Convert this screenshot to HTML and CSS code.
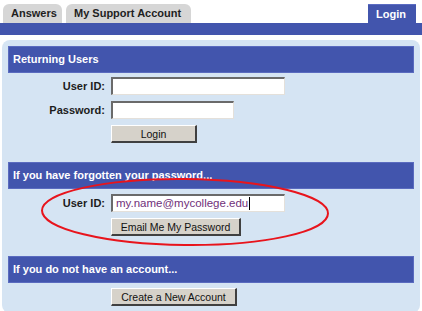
FILE: index.html
```html
<!DOCTYPE html>
<html>
<head>
<meta charset="utf-8">
<link rel="stylesheet" href="styles.css">
</head>
<body>
<div class="tabs">
  <div class="tab">Answers</div>
  <div class="tab">My Support Account</div>
  <div class="tab tab-active">Login</div>
</div>
<div class="tabbar"></div>
<div class="panel">
  <div class="section s1">
    <div class="head">Returning Users</div>
    <div class="form">
      <label class="lbl">User ID:</label>
      <input class="field wide" type="text">
      <label class="lbl">Password:</label>
      <input class="field narrow" type="password">
      <span></span>
      <button class="btn btn-login">Login</button>
    </div>
  </div>
  <div class="section s2">
    <div class="head">If you have forgotten your password...</div>
    <div class="form">
      <label class="lbl">User ID:</label>
      <div class="field wide filled">my.name@mycollege.edu<span class="caret"></span></div>
      <span></span>
      <button class="btn btn-email">Email Me My Password</button>
    </div>
  </div>
  <div class="section s3">
    <div class="head">If you do not have an account...</div>
    <div class="form">
      <span></span>
      <button class="btn btn-create">Create a New Account</button>
    </div>
  </div>
</div>
<svg class="mark" width="422" height="311" viewBox="0 0 422 311">
  <ellipse cx="185" cy="212" rx="143" ry="33" fill="none" stroke="#e8141c" stroke-width="2" transform="rotate(0.6 185 212)"/>
</svg>
</body>
</html>
```

FILE: styles.css
```css
html, body {
  margin: 0;
  padding: 0;
  background: #ffffff;
}
body {
  position: relative;
  width: 422px;
  height: 311px;
  overflow: hidden;
  font-family: "Liberation Sans", Arial, sans-serif;
}
.tabs {
  display: flex;
  gap: 4px;
  padding: 4px 6px 0 3px;
  height: 19px;
}
.tab {
  background: #d6d6d6;
  color: #1e1e1e;
  font-size: 11px;
  font-weight: bold;
  line-height: 19px;
  padding: 0 8px;
  border-radius: 6px 6px 0 0;
}
.tabs .tab:first-child {
  width: 43px;
}
.tabs .tab:nth-child(2) {
  width: 109px;
}
.tab-active {
  margin-left: auto;
  background: #4255ad;
  color: #ffffff;
  border-radius: 0;
  width: 32px;
  padding: 0 8px;
  border-top: 1px solid #5b6cc2;
  line-height: 18px;
}
.tabbar {
  height: 12px;
  background: #4255ad;
}
.panel {
  margin: 5px 2px 0 2px;
  background: #d5e4f3;
  border-radius: 8px;
  padding: 6px 6px 7px 6px;
}
.head {
  height: 25px;
  background: #4255ad;
  border: 1px solid #5a6bbf;
  color: #ffffff;
  font-size: 11px;
  font-weight: bold;
  line-height: 25px;
  padding-left: 4px;
}
.form {
  display: grid;
  grid-template-columns: 97px auto;
  column-gap: 6px;
  row-gap: 6px;
  justify-items: start;
  align-items: center;
}
.s1 .form { margin-top: 4px; }
.s2 .form { margin-top: 5px; }
.s3 .form { margin-top: 5px; }
.s1 { margin-bottom: 19px; }
.s2 { margin-bottom: 20px; }
.lbl {
  justify-self: end;
  font-size: 11px;
  font-weight: bold;
  color: #1c1c1c;
}
.field {
  box-sizing: border-box;
  height: 18px;
  margin: 0;
  padding: 0 3px;
  background: #ffffff;
  border-style: solid;
  border-width: 2px 1px 1px 2px;
  border-color: #6a6a6a #e4e0da #e4e0da #6a6a6a;
  font-family: "Liberation Sans", Arial, sans-serif;
  font-size: 11.5px;
  outline: none;
}
.wide { width: 174px; }
.narrow { width: 123px; }
.filled {
  color: #70307a;
  line-height: 15px;
  display: flex;
  align-items: center;
}
.caret {
  display: inline-block;
  width: 1px;
  height: 13px;
  background: #000000;
  margin-left: 1px;
}
.btn {
  box-sizing: border-box;
  height: 18px;
  margin: 0;
  padding: 0;
  background: #d6d2ca;
  border-style: solid;
  border-width: 1px 2px 2px 1px;
  border-color: #ffffff #404040 #404040 #ffffff;
  font-family: "Liberation Sans", Arial, sans-serif;
  font-size: 10.5px;
  color: #111111;
  line-height: 14px;
}
.btn-login { width: 86px; }
.btn-email { width: 130px; }
.btn-create { width: 126px; }
.mark {
  position: absolute;
  left: 0;
  top: 0;
  pointer-events: none;
}
```
